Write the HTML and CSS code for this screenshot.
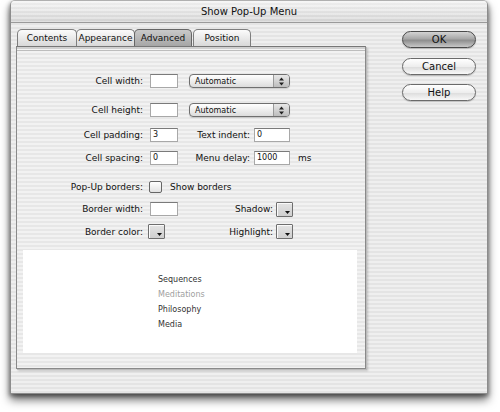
FILE: index.html
```html
<!DOCTYPE html>
<html>
<head>
<meta charset="utf-8">
<link rel="stylesheet" href="styles.css">
</head>
<body>
<div class="window">
  <div class="titlebar">Show Pop-Up Menu</div>
  <div class="content">
    <div class="left">
      <div class="tabs">
        <div class="tab t1">Contents</div>
        <div class="tab t2">Appearance</div>
        <div class="tab t3 selected">Advanced</div>
        <div class="tab t4">Position</div>
      </div>
      <div class="panel">
        <div class="row r1">
          <span class="label lw">Cell width:</span>
          <span class="input"></span>
          <span class="popup"><span class="ptext">Automatic</span><span class="parrows"><svg width="7" height="9" viewBox="0 0 7 9"><path d="M3.5 0.5 L6 3.5 H1 Z M3.5 8.5 L6 5.5 H1 Z" fill="#222"/></svg></span></span>
        </div>
        <div class="row r2">
          <span class="label lw">Cell height:</span>
          <span class="input"></span>
          <span class="popup"><span class="ptext">Automatic</span><span class="parrows"><svg width="7" height="9" viewBox="0 0 7 9"><path d="M3.5 0.5 L6 3.5 H1 Z M3.5 8.5 L6 5.5 H1 Z" fill="#222"/></svg></span></span>
        </div>
        <div class="row r3">
          <span class="label lw">Cell padding:</span>
          <span class="input">3</span>
          <span class="label l2">Text indent:</span>
          <span class="input wide">0</span>
        </div>
        <div class="row r4">
          <span class="label lw">Cell spacing:</span>
          <span class="input">0</span>
          <span class="label l2">Menu delay:</span>
          <span class="input wide">1000</span>
          <span class="label ms">ms</span>
        </div>
        <div class="row r5">
          <span class="label lw">Pop-Up borders:</span>
          <span class="check"></span>
          <span class="label cb">Show borders</span>
        </div>
        <div class="row r6">
          <span class="label lw">Border width:</span>
          <span class="input"></span>
          <span class="label l3">Shadow:</span>
          <span class="swatch"><svg class="tri" width="5" height="3" viewBox="0 0 5 3"><path d="M0 0 H5 L2.5 3 Z" fill="#111"/></svg></span>
        </div>
        <div class="row r7">
          <span class="label lw">Border color:</span>
          <span class="swatch first"><svg class="tri" width="5" height="3" viewBox="0 0 5 3"><path d="M0 0 H5 L2.5 3 Z" fill="#111"/></svg></span>
          <span class="label l4">Highlight:</span>
          <span class="swatch"><svg class="tri" width="5" height="3" viewBox="0 0 5 3"><path d="M0 0 H5 L2.5 3 Z" fill="#111"/></svg></span>
        </div>
        <div class="preview">
          <div class="menu">
            <div class="mi">Sequences</div>
            <div class="mi dim">Meditations</div>
            <div class="mi">Philosophy</div>
            <div class="mi">Media</div>
          </div>
        </div>
      </div>
    </div>
    <div class="buttons">
      <div class="btn default">OK</div>
      <div class="btn b2">Cancel</div>
      <div class="btn b3">Help</div>
    </div>
  </div>
</div>
</body>
</html>
```
FILE: styles.css
```css
html, body {
  margin: 0;
  padding: 0;
  background: #ffffff;
}
body {
  width: 500px;
  height: 412px;
  overflow: hidden;
  font-family: "DejaVu Sans", "Liberation Sans", sans-serif;
  color: #111;
}
.window {
  margin-left: 10px;
  width: 476px;
  height: 392px;
  border: 1px solid #8c8c8c;
  border-top-color: #b0b0b0;
  border-radius: 5px 5px 0 0;
  background: repeating-linear-gradient(#efefef 0 2px, #e4e4e4 2px 4px);
  box-shadow: 0 6px 10px rgba(0,0,0,0.55), -1px 2px 4px rgba(0,0,0,0.25), 1px 2px 4px rgba(0,0,0,0.25);
  overflow: hidden;
}
.titlebar {
  height: 21px;
  line-height: 21px;
  text-align: center;
  font-size: 10px;
  color: #111;
  border-bottom: 1px solid #9a9a9a;
  background:
    repeating-linear-gradient(rgba(255,255,255,0.25) 0 2px, rgba(0,0,0,0.02) 2px 4px),
    linear-gradient(#f4f4f4, #d6d6d6);
}
.content {
  display: flex;
  padding-top: 6px;
}
.left {
  padding-left: 5px;
  width: 352px;
}
.tabs {
  display: flex;
  height: 17px;
  margin-left: 1px;
  position: relative;
  z-index: 1;
}
.tab {
  height: 16px;
  line-height: 17px;
  font-size: 9px;
  text-align: center;
  border: 1px solid #7e7e7e;
  border-bottom: none;
  border-radius: 5px 5px 0 0;
  background: linear-gradient(#fbfbfb, #e6e6e6 60%, #d8d8d8);
  box-sizing: content-box;
  color: #111;
}
.t1 { width: 58px; }
.t2 { width: 57px; margin-left: -1px; }
.t3 { width: 56px; margin-left: -1px; }
.t4 { width: 56px; margin-left: 1px; }
.tab.selected {
  background: linear-gradient(#c9c9c9, #b4b4b4 60%, #a6a6a6);
  border-color: #666;
}
.panel {
  width: 348px;
  height: 294px;
  border: 1px solid #8a8a8a;
  border-top-color: #777;
  background: repeating-linear-gradient(#f2f2f2 0 2px, #e7e7e7 2px 4px);
  box-shadow: inset 0 2px 0 #d0d0d0, inset 0 3px 0 #f4f4f4, inset 0 4px 0 #bdbdbd, 1px 1px 0 #bcbcbc, 2px 2px 2px rgba(0,0,0,0.18);
  padding-top: 27px;
  box-sizing: content-box;
}
.row {
  display: flex;
  align-items: center;
  height: 14px;
}
.r2 { margin-top: 15px; }
.r3 { margin-top: 11px; }
.r4 { margin-top: 9px; }
.r5 { margin-top: 15px; height: 13px; }
.r6 { margin-top: 9px; }
.r7 { margin-top: 8px; height: 15px; }
.label {
  font-size: 9px;
  white-space: nowrap;
  color: #111;
}
.lw { width: 126px; text-align: right; margin-right: 7px; }
.l2 { width: 72px; text-align: right; margin-right: 4px; }
.l3 { width: 95px; text-align: right; margin-right: 3px; }
.l4 { width: 108px; text-align: right; margin-right: 3px; }
.ms { margin-left: 8px; }
.cb { margin-left: 8px; }
.input {
  height: 12px;
  background: #fff;
  border: 1px solid #a8a8a8;
  border-top-color: #7a7a7a;
  font-size: 8px;
  line-height: 12px;
  padding-left: 2px;
  box-sizing: content-box;
  width: 24px;
}
.input.wide { width: 32px; }
.popup {
  margin-left: 11px;
  width: 99px;
  height: 12px;
  border: 1px solid #6f6f6f;
  border-radius: 4px;
  background: linear-gradient(#ffffff, #eeeeee 50%, #dcdcdc);
  display: flex;
  align-items: center;
  justify-content: space-between;
  box-shadow: 0 1px 1px rgba(0,0,0,0.15);
}
.ptext {
  font-size: 8px;
  padding-left: 5px;
  color: #111;
}
.parrows {
  width: 15px;
  height: 12px;
  border-left: 1px solid #9a9a9a;
  border-radius: 0 3px 3px 0;
  background: linear-gradient(#e8e8e8, #bdbdbd);
  display: flex;
  align-items: center;
  justify-content: center;
}
.check {
  margin-left: -1px;
  border: 1px solid #666;
  border-radius: 2px;
  background: linear-gradient(#ffffff, #e2e2e2);
  box-sizing: border-box;
  width: 13px;
  height: 12px;
}
.swatch {
  width: 17px;
  height: 15px;
  box-sizing: border-box;
  border: 1px solid #6e6e6e;
  border-radius: 1px;
  background: linear-gradient(#e4e4e4, #cfcfcf);
  position: relative;
  box-shadow: inset 1px 1px 0 #fafafa;
}
.swatch.first { margin-left: -2px; }
.tri {
  position: absolute;
  right: 2px;
  bottom: 2px;
}
.preview {
  margin-top: 11px;
  margin-left: 6px;
  width: 334px;
  height: 103px;
  background: #ffffff;
  box-sizing: border-box;
  padding-top: 22px;
  padding-left: 135px;
}
.mi {
  font-size: 8px;
  line-height: 15px;
  height: 15px;
  color: #333;
}
.mi.dim { color: #a0a0a0; }
.buttons {
  margin-left: 34px;
  padding-top: 2px;
  display: flex;
  flex-direction: column;
}
.btn {
  width: 72px;
  height: 15px;
  line-height: 15px;
  text-align: center;
  font-size: 10px;
  border: 1px solid #6a6a6a;
  border-radius: 9px;
  background: linear-gradient(#ffffff, #eeeeee 50%, #dedede 55%, #f8f8f8);
  box-shadow: 0 1px 1px rgba(0,0,0,0.2);
  color: #111;
}
.btn.default {
  background: linear-gradient(#d4d4d4, #a8a8a8 45%, #8e8e8e 55%, #c8c8c8);
  border-color: #4a4a4a;
}
.b2 { margin-top: 10px; }
.b3 { margin-top: 9px; }
```
